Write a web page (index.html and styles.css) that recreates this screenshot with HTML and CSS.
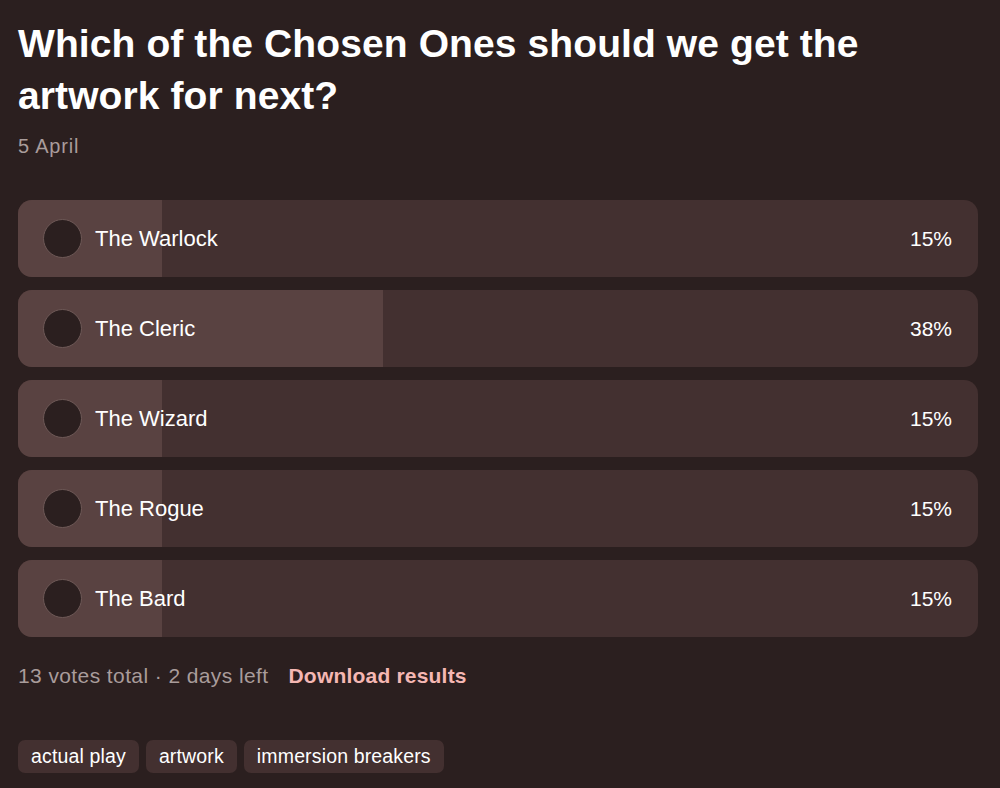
FILE: index.html
```html
<!DOCTYPE html>
<html lang="en">
<head>
<meta charset="utf-8">
<title>Poll</title>
<link rel="stylesheet" href="styles.css">
</head>
<body>
<main class="poll">
  <h1 class="title">Which of the Chosen Ones should we get the artwork for next?</h1>
  <div class="date">5 April</div>
  <ul class="options">
    <li class="option"><span class="fill" style="width:15%"></span><span class="radio"></span><span class="label">The Warlock</span><span class="pct">15%</span></li>
    <li class="option"><span class="fill" style="width:38%"></span><span class="radio"></span><span class="label">The Cleric</span><span class="pct">38%</span></li>
    <li class="option"><span class="fill" style="width:15%"></span><span class="radio"></span><span class="label">The Wizard</span><span class="pct">15%</span></li>
    <li class="option"><span class="fill" style="width:15%"></span><span class="radio"></span><span class="label">The Rogue</span><span class="pct">15%</span></li>
    <li class="option"><span class="fill" style="width:15%"></span><span class="radio"></span><span class="label">The Bard</span><span class="pct">15%</span></li>
  </ul>
  <div class="meta"><span class="stats">13 votes total · 2 days left</span><a class="download" href="#">Download results</a></div>
  <div class="tags">
    <span class="tag">actual play</span>
    <span class="tag">artwork</span>
    <span class="tag">immersion breakers</span>
  </div>
</main>
</body>
</html>
```
FILE: styles.css
```css
html, body {
  margin: 0;
  padding: 0;
  background: #2b1f1f;
}
body {
  font-family: "Liberation Sans", Arial, sans-serif;
  color: #ffffff;
}
.poll {
  padding: 18px 22px 0 18px;
}
.title {
  margin: 0;
  font-size: 39px;
  line-height: 52px;
  font-weight: 700;
  letter-spacing: 0.1px;
}
.date {
  margin-top: 12px;
  font-size: 20px;
  line-height: 24px;
  letter-spacing: 0.8px;
  color: #a99c9b;
}
.options {
  list-style: none;
  margin: 42px 0 0 0;
  padding: 0;
  display: flex;
  flex-direction: column;
  gap: 13px;
}
.option {
  position: relative;
  height: 77px;
  border-radius: 14px;
  background: #433030;
  overflow: hidden;
  display: flex;
  align-items: center;
  padding: 0 26px 0 25px;
}
.fill {
  position: absolute;
  left: 0;
  top: 0;
  bottom: 0;
  background: #594241;
}
.radio {
  position: relative;
  width: 37px;
  height: 37px;
  border-radius: 50%;
  background: #2b1f1f;
  border: 1px solid #6e5957;
  flex: none;
}
.label {
  position: relative;
  margin-left: 13px;
  font-size: 22px;
  flex: 1;
}
.pct {
  position: relative;
  font-size: 21px;
}
.meta {
  margin-top: 26px;
  display: flex;
  align-items: baseline;
  gap: 20px;
  font-size: 21px;
  line-height: 26px;
}
.stats {
  color: #a99c9b;
  letter-spacing: 0.4px;
}
.download {
  color: #f5b7b3;
  font-weight: 700;
  text-decoration: none;
  letter-spacing: 0.2px;
}
.tags {
  margin-top: 51px;
  display: flex;
  gap: 7px;
}
.tag {
  background: #433030;
  border-radius: 7px;
  padding: 0 13px;
  height: 33px;
  line-height: 33px;
  font-size: 19.5px;
  letter-spacing: 0.15px;
}
```
